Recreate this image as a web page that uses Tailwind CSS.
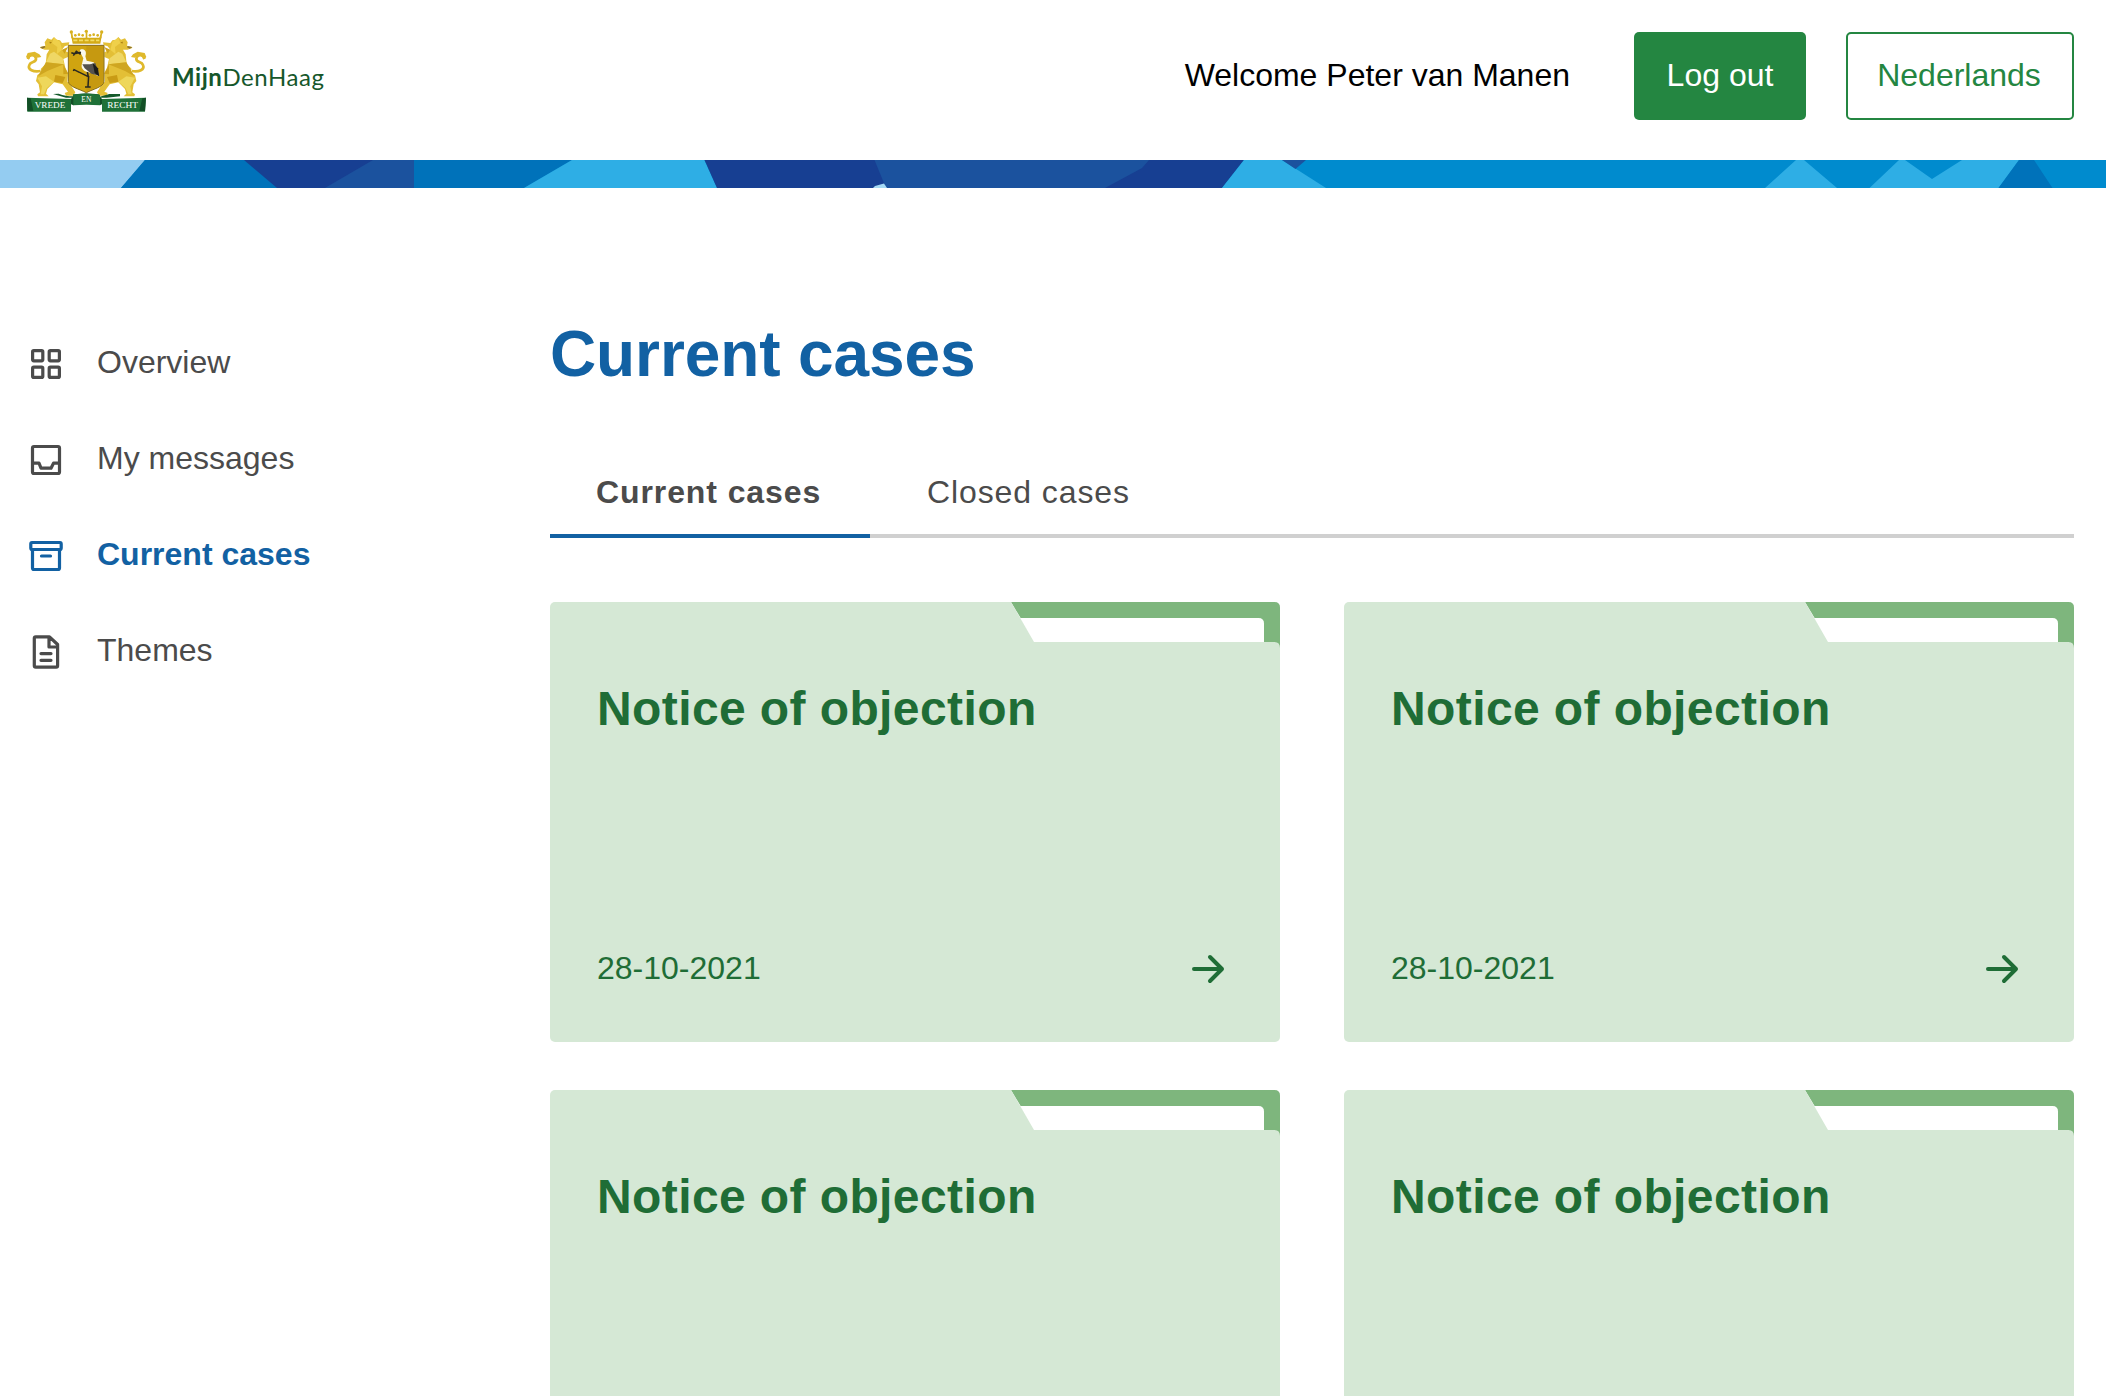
<!DOCTYPE html>
<html lang="en">
<head>
<meta charset="utf-8">
<title>MijnDenHaag</title>
<script src="https://cdn.jsdelivr.net/npm/@tailwindcss/browser@4"></script>
</head>
<body class="h-[1396px] overflow-hidden bg-white font-['Liberation_Sans',Arial,sans-serif] text-[32px] leading-[48px] text-black">
<svg class="hidden">
  <symbol id="arrow" viewBox="0 0 40 40"><path d="M6 20H34M22 8L34 20L22 32" fill="none" stroke="currentColor" stroke-width="4" stroke-linecap="round" stroke-linejoin="round"/></symbol>
  <symbol id="folder" viewBox="0 0 269 46"><path d="M0 0H263.500Q269 0 269 5.500V46H262L24 40Z" fill="#7eb67d"/><path d="M9 16H247.500Q253 16 253 21.500V40H23Z" fill="#fff"/><path d="M0 0L23 40H263.500Q269 40 269 46H0Z" fill="#d5e8d5"/></symbol>
  <symbol id="lion" viewBox="40 60 140 190" overflow="visible">
    <path d="M92 168C70 172 52 164 58 150C62 138 80 144 78 130C74 116 56 118 54 132" fill="none" stroke="#dfb92c" stroke-width="8"/>
    <path d="M48 126L53 114L74 110L88 118L94 126L82 128L74 120L62 122L56 134Z" fill="#dfb92c"/>
    <path d="M104 82L112 70L124 74L132 66L140 74L150 76L156 84L178 82L176 90L164 94L156 104L174 112V126L160 132L166 158L174 174L172 200L180 206L196 232L190 242H168L164 234L174 230L158 208L132 202L112 222L108 236L116 244H84L82 238L90 232L86 208L78 198L82 180L96 170L92 162L106 148L108 138L110 118L118 104L104 104L92 100L90 96L106 92Z" fill="#e3bf36"/>
    <path d="M132 110L158 130L162 148L108 142L120 116Z" fill="#efd765"/>
    <path d="M108 142L162 148L132 160L112 168L84 184L94 166Z" fill="#cfa620"/>
    <path d="M132 68L150 80L156 104L140 118L142 96L126 84Z" fill="#efd04a"/>
    <path d="M156 104L174 96L164 116ZM160 148L174 176L160 178Z" fill="#cfa31b"/>
    <path d="M82 188L108 184L132 200L110 220L102 238H92L96 214Z" fill="#eed75b"/>
    <path d="M136 180L166 186L158 204L132 200Z" fill="#c99b15"/>
    <path d="M90 97L104 93L106 97L98 101Z" fill="#8d7331"/>
    <path d="M118 80L126 82L120 86Z" fill="#a97f12"/>
  </symbol>
</svg>

<header class="flex h-40 items-start justify-between pl-5 pr-8">
  <a class="mt-[25px] flex items-start">
    <svg class="h-[90px] w-[130px]" viewBox="30 30 390 270">
      <use href="#lion" x="40" y="60" width="140" height="190"/>
      <g transform="translate(457 0) scale(-1 1)"><use href="#lion" x="40" y="60" width="140" height="190"/></g>
      <path d="M184 64L190 68H268L275 64L271 86H188Z" fill="#d4ab17"/>
      <path d="M190 76H268" stroke="#f3dc63" stroke-width="5" stroke-dasharray="12 5"/>
      <g fill="#d8b11f"><circle cx="184" cy="51" r="5"/><circle cx="229" cy="49" r="5"/><circle cx="275" cy="51" r="5"/><circle cx="196" cy="61" r="4"/><circle cx="207" cy="59" r="4"/><circle cx="218" cy="61" r="4"/><circle cx="240" cy="61" r="4"/><circle cx="251" cy="59" r="4"/><circle cx="263" cy="61" r="4"/><path d="M182 54H187L190 70H184ZM227 52H232V70H227ZM272 54H277L274 70H268Z"/></g>
      <path d="M175 91H282V200C280 216 250 222 229 233C208 222 178 216 175 200Z" fill="#d0a410" stroke="#876c1c" stroke-width="3"/>
      <path d="M229 94H279V200C275 212 250 218 229 229Z" fill="#bd9010" opacity=".55"/>
      <path d="M213 116C207 108 209 101 219 103C229 106 229 116 226 124L230 137L251 142L264 168L266 184L250 176L230 170C218 166 212 156 216 146L220 130Z" fill="#f9f8ee"/>
      <path d="M217 148H240L256 144L268 182L244 176L224 160Z" fill="#55524e"/>
      <path d="M248 144L264 160L267 184L254 174Z" fill="#1c1c1a"/>
      <path d="M213 112L194 116L184 113M190 122L199 109L212 118M232 171L235 185L192 164L190 168M208 172L192 164M236 183L234 214M225 216H242" fill="none" stroke="#292821" stroke-width="4.500"/>
      <path d="M129 237L146 236C160 242 175 244 190 244L194 238L229 235L266 238L269 245L298 237H330V244L290 248H168Z" fill="#145a2b"/>
      <path d="M189 238Q229 234 270 239V271Q229 268 189 271Z" fill="#1f7138"/>
      <path d="M51 248L183 252V290H52Z" fill="#1f7138"/><path d="M51 248L62 250L70 288H52ZM183 252L190 244V271L183 268Z" fill="#124f26"/>
      <path d="M276 252L408 248L405 290H276Z" fill="#1f7138"/><path d="M408 248L397 250L388 288H405ZM276 252L270 245V271L276 268Z" fill="#124f26"/>
      <g fill="#fff" font-family="Liberation Serif, serif" font-size="25" font-weight="400" text-anchor="middle"><text x="120" y="279" textLength="92" lengthAdjust="spacingAndGlyphs">VREDE</text><text x="229" y="262" font-size="22" textLength="30" lengthAdjust="spacingAndGlyphs">EN</text><text x="338" y="279" textLength="92" lengthAdjust="spacingAndGlyphs">RECHT</text></g>
    </svg>
    <span class="ml-[22px] mt-9 font-[Lato,sans-serif] text-[24px] leading-8 tracking-[0.55px] text-[#16572b]"><b class="font-bold">Mijn</b>DenHaag</span>
  </a>
  <div class="flex items-center pt-8">
    <span class="mr-16 pb-0.5">Welcome Peter van Manen</span>
    <button class="mr-10 h-[88px] w-[172px] rounded-[5px] bg-[#248641] pb-0.5 text-white">Log out</button>
    <button class="h-[88px] w-[228px] rounded-[5px] border-2 border-[#248641] pb-0.5 pr-0.5 text-[#248641]">Nederlands</button>
  </div>
</header>

<svg class="block h-7 w-full" viewBox="0 0 2106 28" preserveAspectRatio="none">
  <path d="M0 0H2106V28H0Z" fill="#008bce"/>
  <path d="M0 0H145L121 28H0Z" fill="#94ccf1"/>
  <path d="M145 0H572L524 28H121Z" fill="#0072ba"/>
  <path d="M244 0H414V28H277Z" fill="#173f92"/>
  <path d="M373 0H414V28H325Z" fill="#1b529e"/>
  <path d="M572 0H704.500L717 28H524Z" fill="#2eaee5"/>
  <path d="M704.500 0H1244L1222 28H717Z" fill="#173f92"/>
  <path d="M874.500 0H1149L1142 8L1105 28H886Z" fill="#1b529e"/>
  <path d="M873 28L875 26L884 23.500L887 28Z" fill="#a5daf5"/>
  <path d="M1244 0H1282L1326 28H1222Z" fill="#2eaee5"/>
  <path d="M1282 0H1306L1295.500 9Z" fill="#1b529e"/>
  <path d="M1796 0H1804L1837 28H1765ZM1899 0H1905L1932 19L1962 0H2019L1998.500 28H1869.500Z" fill="#2eaee5"/>
  <path d="M2019 0H2034L2052.500 28H1998.500Z" fill="#0072ba"/>
</svg>

<div class="flex">
  <nav class="flex w-[550px] shrink-0 flex-col gap-12 pl-[26px] pt-[152px] text-[#4b4b4b]">
    <a class="flex items-center gap-[31px]">
      <svg class="size-10" viewBox="0 0 40 40" fill="none" stroke="currentColor" stroke-width="3.200"><rect x="6.600" y="6.600" width="10.200" height="10.200" rx="1.200"/><rect x="23.200" y="6.600" width="10.200" height="10.200" rx="1.200"/><rect x="6.600" y="23.200" width="10.200" height="10.200" rx="1.200"/><rect x="23.200" y="23.200" width="10.200" height="10.200" rx="1.200"/></svg>
      <span class="pb-[3px] leading-[45px]">Overview</span>
    </a>
    <a class="flex items-center gap-[31px]">
      <svg class="size-10" viewBox="0 0 40 40" fill="none" stroke="currentColor" stroke-width="3.200" stroke-linejoin="round"><rect x="6.500" y="6.500" width="27" height="27" rx="1.500"/><path d="M6.500 23.200H13L15 28.200H25L27.500 23.200H33.500"/></svg>
      <span class="pb-[3px] leading-[45px]">My messages</span>
    </a>
    <a class="flex items-center gap-[31px] font-bold text-[#1261a3]">
      <svg class="size-10" viewBox="0 0 40 40" fill="none" stroke="currentColor" stroke-width="3.200" stroke-linecap="round" stroke-linejoin="round"><path d="M6.500 14V32Q6.500 33.500 8 33.500H32Q33.500 33.500 33.500 32V14M15.500 20H24.500"/><path d="M6 6.500H34Q35.200 6.500 35.200 8V12Q35.200 13.500 34 13.500H6Q4.800 13.500 4.800 12V8Q4.800 6.500 6 6.500Z"/></svg>
      <span class="pb-[3px] leading-[45px]">Current cases</span>
    </a>
    <a class="flex items-center gap-[31px]">
      <svg class="size-10" viewBox="0 0 40 40" fill="none" stroke="currentColor" stroke-width="3.200" stroke-linecap="round" stroke-linejoin="round"><path d="M23.500 4.800H9.700Q8.300 4.800 8.300 6.200V33.800Q8.300 35.200 9.700 35.200H30.200Q31.600 35.200 31.600 33.800V12.500ZM23 5V15H31M15 21.600H25M15 28.300H25"/></svg>
      <span class="pb-[3px] leading-[45px]">Themes</span>
    </a>
  </nav>

  <main class="w-[1524px] shrink-0 pt-[126px]">
    <h1 class="text-[64px] font-bold leading-20 tracking-[-0.1px] text-[#1261a3]">Current cases</h1>
    <div class="mt-[60px] flex h-[84px] border-b-4 border-[#d0d0d0] text-[#4b4b4b]">
      <a class="h-[84px] w-80 border-b-4 border-[#1261a3] pl-[46px] pt-[14px] font-bold tracking-[0.9px]">Current cases</a>
      <a class="pl-[57px] pt-[14px] tracking-[0.9px]">Closed cases</a>
    </div>
    <div class="mt-16 grid grid-cols-2 gap-x-16 gap-y-12 text-[#1f6d36]">
      <a class="relative flex h-[440px] flex-col justify-between rounded-[5px] bg-[#d5e8d5] pb-12 pl-[47px] pr-[52px] pt-[77px]">
        <svg class="absolute right-0 top-0 h-[46px] w-[269px] bg-white"><use href="#folder"/></svg>
        <h2 class="text-5xl font-bold leading-[60px] tracking-[0.4px]">Notice of objection</h2>
        <div class="flex items-center justify-between"><span class="pb-0.5">28-10-2021</span><svg class="size-10"><use href="#arrow"/></svg></div>
      </a>
      <a class="relative flex h-[440px] flex-col justify-between rounded-[5px] bg-[#d5e8d5] pb-12 pl-[47px] pr-[52px] pt-[77px]">
        <svg class="absolute right-0 top-0 h-[46px] w-[269px] bg-white"><use href="#folder"/></svg>
        <h2 class="text-5xl font-bold leading-[60px] tracking-[0.4px]">Notice of objection</h2>
        <div class="flex items-center justify-between"><span class="pb-0.5">28-10-2021</span><svg class="size-10"><use href="#arrow"/></svg></div>
      </a>
      <a class="relative h-[306px] rounded-t-[5px] bg-[#d5e8d5] px-[47px] pt-[77px]">
        <svg class="absolute right-0 top-0 h-[46px] w-[269px] bg-white"><use href="#folder"/></svg>
        <h2 class="text-5xl font-bold leading-[60px] tracking-[0.4px]">Notice of objection</h2>
      </a>
      <a class="relative h-[306px] rounded-t-[5px] bg-[#d5e8d5] px-[47px] pt-[77px]">
        <svg class="absolute right-0 top-0 h-[46px] w-[269px] bg-white"><use href="#folder"/></svg>
        <h2 class="text-5xl font-bold leading-[60px] tracking-[0.4px]">Notice of objection</h2>
      </a>
    </div>
  </main>
</div>
</body>
</html>
